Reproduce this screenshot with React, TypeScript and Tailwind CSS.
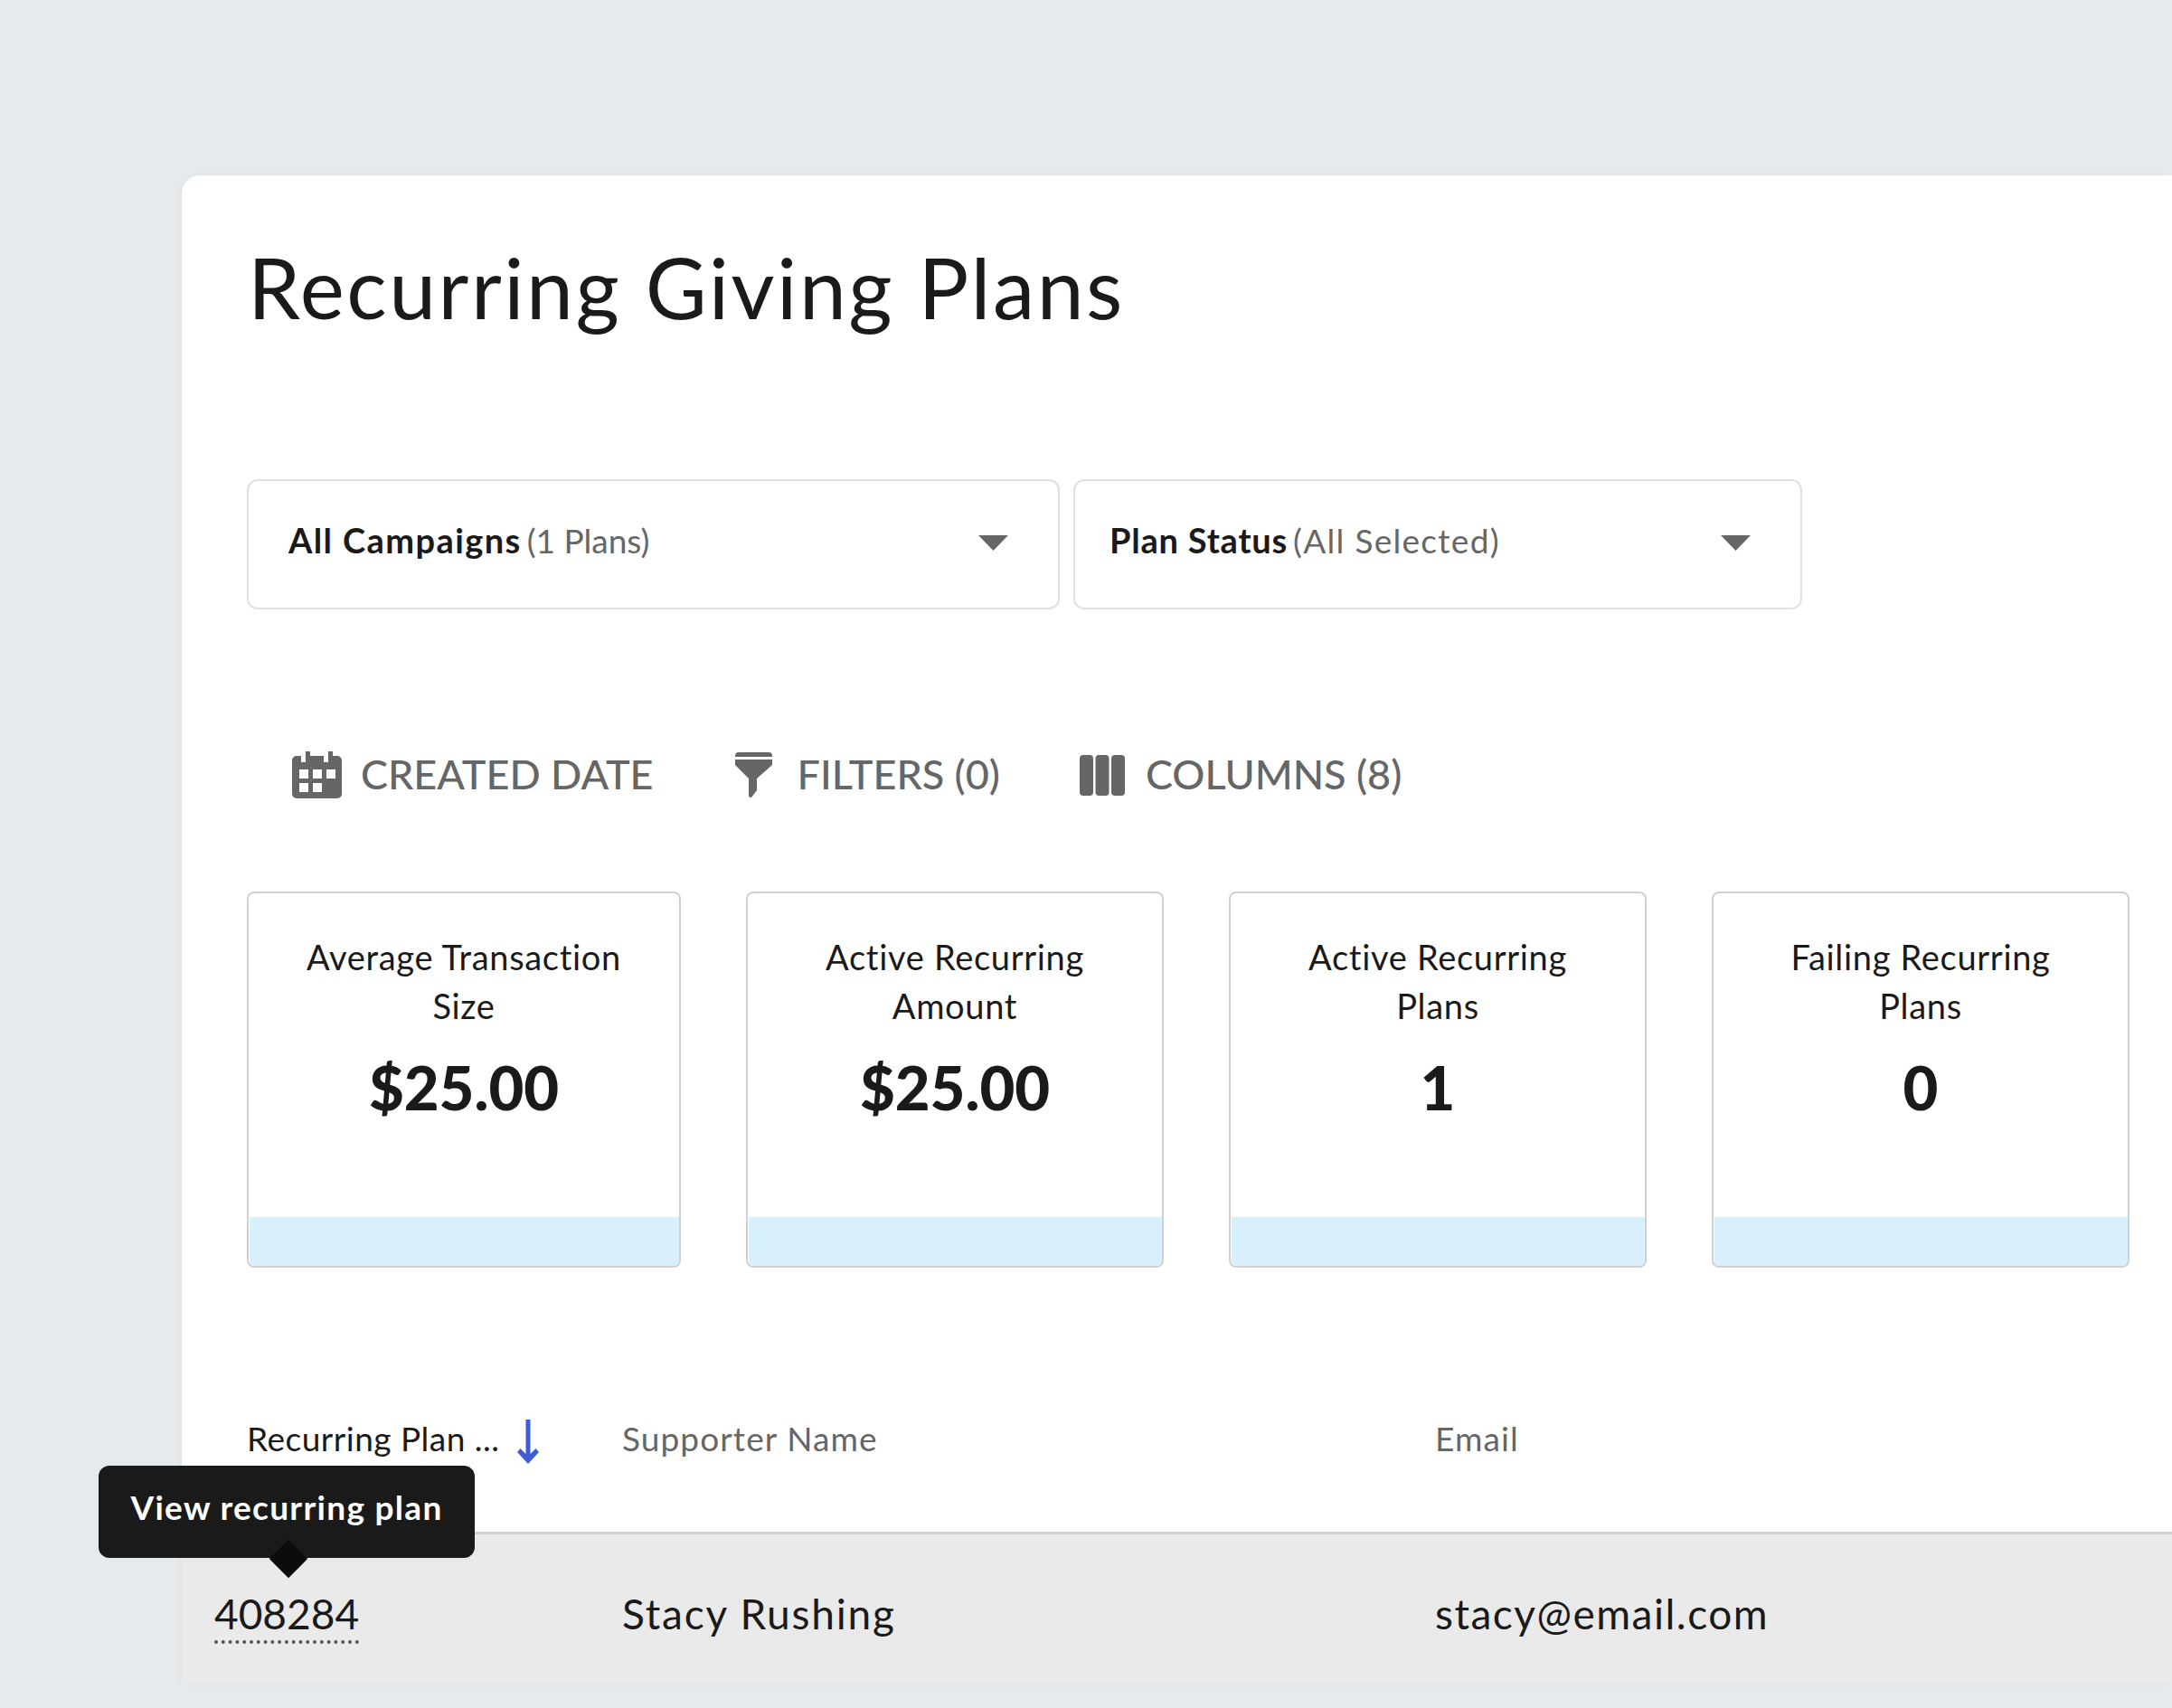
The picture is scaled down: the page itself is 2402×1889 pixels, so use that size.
const stats = [
  { title: ['Average Transaction', 'Size'], value: '$25.00', width: 'w-[480px]' },
  { title: ['Active Recurring', 'Amount'], value: '$25.00', width: 'w-[462px]' },
  { title: ['Active Recurring', 'Plans'], value: '1', width: 'w-[462px]' },
  { title: ['Failing Recurring', 'Plans'], value: '0', width: 'w-[462px]' },
]

function Caret() {
  return (
    <svg width="33" height="17" viewBox="0 0 33 17" className="mt-[7px] shrink-0">
      <path d="M0 0h33L16.500 17z" fill="#666" />
    </svg>
  )
}

function CalendarIcon() {
  return (
    <svg width="55" height="52" viewBox="0 0 55 52" className="shrink-0">
      <path
        fillRule="evenodd"
        fill="#666"
        d="M5 5h5v7h5V0h5v5h15v7h5V0h5v5h5a5 5 0 0 1 5 5v37a5 5 0 0 1-5 5H5a5 5 0 0 1-5-5V10a5 5 0 0 1 5-5zM8 20v10h10V20zm15 0v10h10V20zm15 0v10h10V20zM8 35v10h10V35zm15 0v10h10V35z"
      />
    </svg>
  )
}

function FilterIcon() {
  return (
    <svg width="41" height="50" viewBox="0 0 41 50" className="shrink-0">
      <path fill="#666" d="M4 0h33a4 4 0 0 1 4 4v1H0V4a4 4 0 0 1 4-4zM0 8h41v6L24 29v13l-6 8h-2l-1-2V29L0 14z" />
    </svg>
  )
}

function ColumnsIcon() {
  return (
    <svg width="50" height="45" viewBox="0 0 50 45" className="shrink-0">
      <rect x="0" y="0" width="15" height="45" rx="4" fill="#666" />
      <rect x="17.500" y="0" width="15" height="45" rx="4" fill="#666" />
      <rect x="35" y="0" width="15" height="45" rx="4" fill="#666" />
    </svg>
  )
}

function SortArrow() {
  return (
    <svg width="24" height="49" viewBox="0 0 24 49" className="shrink-0">
      <path fill="#3f5bd5" d="M9.500 0h5v38l6-6 3.500 4-12 13L0 36l3.500-4 6 6z" />
    </svg>
  )
}

export default function App() {
  return (
    <div className="h-[1889px] w-[2402px] overflow-hidden bg-[#e6eaed] pl-[201px] pt-[194px] font-['Lato',sans-serif] text-[#1a1a1a]">
      <div className="h-[1668px] rounded-tl-[20px] bg-white shadow-[-3px_0_8px_rgba(0,0,0,0.03)]">
        <div className="pl-[72px]">
          <h1 className="pl-[1px] pt-[68px] text-[93px] leading-[110px] font-normal tracking-[2.5px]">Recurring Giving Plans</h1>

          <div className="mt-[158px] flex gap-[15px]">
            <div className="flex h-[144px] w-[899px] items-center justify-between rounded-[12px] border-[2px] border-[#e0e0e0] pb-[10px] pl-[44px] pr-[55px]">
              <div className="text-[38px]">
                <span className="font-bold tracking-[1.4px]">All Campaigns</span>
                <span className="ml-[6px] text-[37px] text-[#666]">(1 Plans)</span>
              </div>
              <Caret />
            </div>
            <div className="flex h-[144px] w-[806px] items-center justify-between rounded-[12px] border-[2px] border-[#e0e0e0] pb-[10px] pl-[38px] pr-[55px]">
              <div className="text-[38px]">
                <span className="font-bold tracking-[0.8px]">Plan Status</span>
                <span className="ml-[6px] text-[37px] tracking-[1.3px] text-[#666]">(All Selected)</span>
              </div>
              <Caret />
            </div>
          </div>

          <div className="mt-[143px] flex h-[80px] items-center pl-[50px] text-[45px] text-[#666]">
            <CalendarIcon />
            <span className="ml-[21px] font-medium">CREATED DATE</span>
            <span className="ml-[90px]"><FilterIcon /></span>
            <span className="ml-[28px] font-medium">FILTERS (0)</span>
            <span className="ml-[88px]"><ColumnsIcon /></span>
            <span className="ml-[23px] font-medium">COLUMNS (8)</span>
          </div>

          <div className="mt-[89px] flex gap-[72px]">
            {stats.map((s, i) => (
              <div key={i} className={`flex h-[416px] flex-col overflow-hidden rounded-[8px] border-[2px] border-[#d0d0d0] ${s.width}`}>
                <div className="flex-1 pt-[43px] text-center">
                  <div className="text-[38px] leading-[54px] tracking-[0.7px]">
                    {s.title[0]}<br />{s.title[1]}
                  </div>
                  <div className="mt-[23px] text-[67px] leading-[80px] font-black">{s.value}</div>
                </div>
                <div className="ml-[1px] h-[54px] bg-[#d8f0fc]" />
              </div>
            ))}
          </div>
        </div>

        <div className="mt-[130px] flex h-[165px] border-b-[3px] border-[#d0d0d0] text-[37px] leading-[118px]">
          <div className="flex w-[487px] items-start pl-[72px]">
            <span className="mr-[19px] tracking-[0.5px]">Recurring Plan ...</span>
            <span className="mt-[38px]"><SortArrow /></span>
          </div>
          <div className="w-[899px] tracking-[1.1px] text-[#666]">Supporter Name</div>
          <div className="tracking-[1.1px] text-[#666]">Email</div>
        </div>

        <div className="flex h-[165px] items-center bg-[#eaeaea] pt-[9px] text-[46px]">
          <div className="w-[487px] pl-[36px]">
            <span className="relative inline-block border-b-[4px] border-dotted border-[#555] leading-[58px]">
              408284
              <span className="absolute bottom-[91px] left-[-128px] w-[416px] rounded-[12px] bg-[#1a1a1a] pb-[29px] pt-[19px] text-center text-[37px] leading-[54px] font-bold tracking-[1.3px] text-white">
                View recurring plan
                <span className="absolute bottom-[-16px] left-[195px] h-[30px] w-[30px] rotate-45 bg-[#0c0c0c]" />
              </span>
            </span>
          </div>
          <div className="w-[899px] tracking-[1.8px]">Stacy Rushing</div>
          <div className="tracking-[1.5px]">stacy@email.com</div>
        </div>
      </div>
    </div>
  )
}
